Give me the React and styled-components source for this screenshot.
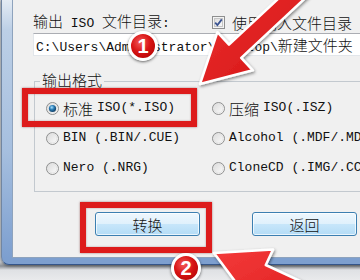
import React from 'react'
import styled, { createGlobalStyle } from 'styled-components'

const GlobalStyle = createGlobalStyle`
  html, body { margin: 0; padding: 0; }
  body { background: #d6d8db; overflow: hidden; }
`

const Screen = styled.div`
  position: relative;
  width: 360px;
  height: 280px;
  overflow: hidden;
  background: linear-gradient(180deg, #c9ccd0 0, #c9ccd0 262px, #8a8e94 266px, #dfe1e4 270px, #e9eaec 280px);
`

const Window = styled.div`
  width: 420px;
  height: 258px;
  padding: 0 0 6px 10px;
  border-left: 1px solid #7186a2;
  border-bottom: 1px solid #35568a;
  border-bottom-left-radius: 8px;
  margin-left: 1px;
  background: linear-gradient(180deg, #e4ebf3 0, #bccfe6 30px, #a6bfdf 150px, #7d9fcf 258px);
  box-shadow: 0 1px 3px rgba(0, 0, 0, 0.45);
`

const Body = styled.div`
  height: 100%;
  box-sizing: border-box;
  background: #f0f0f0;
  border-left: 1px solid #8ea3bd;
  border-bottom: 1px solid #8ea3bd;
  padding: 14px 0 0 20px;
  color: #111;
  font: 13px/16px "Liberation Mono", "Noto Sans CJK SC", monospace;
`

const Han = styled.span`
  font-family: "Noto Sans CJK SC", sans-serif;
  font-size: 15px;
  font-weight: 300;
  line-height: 1;
`

const mixed = (s) =>
  s
    .split(/([\u3400-\u9fff]+)/)
    .filter(Boolean)
    .map((p, i) =>
      /[\u3400-\u9fff]/.test(p) ? <Han key={i}>{p}</Han> : <React.Fragment key={i}>{p}</React.Fragment>
    )

const TopRow = styled.div`
  display: flex;
  align-items: center;
  height: 16px;
`

const Label = styled.span`
  width: ${(p) => p.$w || 'auto'};
  white-space: nowrap;
`

const CheckWrap = styled.label`
  display: flex;
  align-items: center;
  gap: 7px;
  white-space: nowrap;
`

const PathInput = styled.div`
  margin-top: 3px;
  height: 23px;
  box-sizing: border-box;
  background: #fff;
  border: 1px solid #e2e6ea;
  border-top-color: #abadb3;
  padding: 3px 0 0 2px;
  white-space: nowrap;
  overflow: hidden;
`

const Group = styled.fieldset`
  margin: 16px 0 0 1px;
  padding: 0 0 8px 11px;
  border: 1px solid #c3c9cf;
  border-right: none;
`

const Legend = styled.legend`
  margin-left: -6px;
  padding: 0 2px;
  height: 18px;
`

const Options = styled.div`
  display: grid;
  grid-template-columns: 166px 1fr;
  grid-auto-rows: 30px;
  margin-top: 3px;
`

const Option = styled.div`
  display: flex;
  align-items: center;
  gap: 4px;
  white-space: nowrap;
`

const Buttons = styled.div`
  display: flex;
  gap: 52px;
  margin: 20px 0 0 62px;
`

const Button = styled.div`
  width: 105px;
  height: 24px;
  box-sizing: border-box;
  border: 1px solid #3c7fb1;
  border-radius: 3px;
  background: linear-gradient(180deg, #eef7fd 0%, #e0f1fc 48%, #c7e6fa 52%, #b4dcf6 100%);
  box-shadow: inset 0 0 0 1px rgba(255, 255, 255, 0.7);
  display: flex;
  align-items: center;
  justify-content: center;
`

const Highlight = styled.div`
  position: absolute;
  left: ${(p) => p.$x}px;
  top: ${(p) => p.$y}px;
  width: ${(p) => p.$w}px;
  height: ${(p) => p.$h}px;
  box-sizing: border-box;
  border: 6px solid #dd1b1b;
  box-shadow: 0 0 2px rgba(90, 0, 0, 0.5), inset 0 0 2px rgba(90, 0, 0, 0.4);
`

const Badge = styled.div`
  position: absolute;
  left: ${(p) => p.$x - 15}px;
  top: ${(p) => p.$y - 15}px;
  width: 30px;
  height: 30px;
  box-sizing: border-box;
  border-radius: 50%;
  border: 3px solid #fff;
  background: radial-gradient(circle at 40% 35%, #f35a5a 0%, #d81414 45%, #a80000 100%);
  box-shadow: 0 1px 3px rgba(0, 0, 0, 0.6);
  color: #fff;
  font: bold 20px/24px "Liberation Sans", Arial, sans-serif;
  text-align: center;
`

const Overlay = styled.svg`
  position: absolute;
  left: 0;
  top: 0;
  width: 360px;
  height: 280px;
  pointer-events: none;
`

const arrowPoints = (tx, ty, dx, dy, L, W, s, len) => {
  const m = Math.hypot(dx, dy)
  const ux = dx / m
  const uy = dy / m
  const nx = -uy
  const ny = ux
  const bx = tx - L * ux
  const by = ty - L * uy
  const ex = tx - len * ux
  const ey = ty - len * uy
  const pts = [
    [tx, ty],
    [bx + W * nx, by + W * ny],
    [bx + s * nx, by + s * ny],
    [ex + s * nx, ey + s * ny],
    [ex - s * nx, ey - s * ny],
    [bx - s * nx, by - s * ny],
    [bx - W * nx, by - W * ny],
  ]
  return pts.map((p) => p.map((v) => v.toFixed(1)).join(',')).join(' ')
}

const Radio = ({ checked }) => (
  <svg width="13" height="13" viewBox="0 0 13 13">
    <defs>
      <linearGradient id="rg" x1="0" y1="0" x2="1" y2="1">
        <stop offset="0" stopColor="#d8d8d8" />
        <stop offset="1" stopColor="#ffffff" />
      </linearGradient>
      <radialGradient id="rd" cx="0.4" cy="0.35" r="0.7">
        <stop offset="0" stopColor="#a9e2ff" />
        <stop offset="0.45" stopColor="#2a7bb5" />
        <stop offset="1" stopColor="#0c3558" />
      </radialGradient>
    </defs>
    <circle cx="6.5" cy="6.5" r="6" fill="url(#rg)" stroke="#8e8f8f" />
    <circle cx="6.5" cy="6.5" r="4.5" fill="none" stroke="#e4e4e4" />
    {checked && <circle cx="6.5" cy="6.5" r="3.6" fill="url(#rd)" />}
  </svg>
)

const Check = () => (
  <svg width="13" height="13" viewBox="0 0 13 13">
    <defs>
      <linearGradient id="cg" x1="0" y1="0" x2="1" y2="1">
        <stop offset="0" stopColor="#dcdcdc" />
        <stop offset="1" stopColor="#fbfbfb" />
      </linearGradient>
    </defs>
    <rect x="0.5" y="0.5" width="12" height="12" fill="#f4f4f4" stroke="#8e8f8f" />
    <rect x="2.5" y="2.5" width="8" height="8" fill="url(#cg)" stroke="#c6c6c6" />
    <path d="M3.2 6.6 L5.4 9 L9.8 3.4" fill="none" stroke="#3a5391" strokeWidth="1.8" />
  </svg>
)

const formats = [
  ['标准 ISO(*.ISO)', true],
  ['压缩 ISO(.ISZ)', false],
  ['BIN (.BIN/.CUE)', false],
  ['Alcohol (.MDF/.MDS)', false],
  ['Nero (.NRG)', false],
  ['CloneCD (.IMG/.CCD)', false],
]

export default function App() {
  return (
    <>
      <GlobalStyle />
      <Screen>
        <Window>
          <Body>
            <TopRow>
              <Label $w="179px">{mixed('输出 ISO 文件目录:')}</Label>
              <CheckWrap>
                <Check />
                {mixed('使用输入文件目录')}
              </CheckWrap>
            </TopRow>
            <PathInput>{mixed('C:\\Users\\Administrator\\Desktop\\新建文件夹')}</PathInput>
            <Group>
              <Legend>{mixed('输出格式')}</Legend>
              <Options>
                {formats.map(([t, c]) => (
                  <Option key={t}>
                    <Radio checked={c} />
                    {mixed(t)}
                  </Option>
                ))}
              </Options>
            </Group>
            <Buttons>
              <Button>{mixed('转换')}</Button>
              <Button>{mixed('返回')}</Button>
            </Buttons>
          </Body>
        </Window>

        <Highlight $x={22} $y={88} $w={175} $h={39} />
        <Highlight $x={80} $y={202} $w={132} $h={51} />

        <Overlay viewBox="0 0 360 280">
          <defs>
            <linearGradient id="ar" x1="0" y1="0" x2="1" y2="1">
              <stop offset="0" stopColor="#f43a3a" />
              <stop offset="1" stopColor="#cc0a0a" />
            </linearGradient>
            <filter id="sh" x="-20%" y="-20%" width="140%" height="140%">
              <feDropShadow dx="1" dy="1.5" stdDeviation="1.5" floodColor="#000" floodOpacity="0.45" />
            </filter>
          </defs>
          <polygon
            points={arrowPoints(200, 84, -0.731, 0.682, 48, 26, 9, 200)}
            fill="url(#ar)"
            stroke="#fff"
            strokeWidth="2.5"
            strokeLinejoin="round"
            filter="url(#sh)"
          />
          <polygon
            points={arrowPoints(214, 253, -0.906, -0.423, 52, 28, 11, 200)}
            fill="url(#ar)"
            stroke="#fff"
            strokeWidth="2.5"
            strokeLinejoin="round"
            filter="url(#sh)"
          />
        </Overlay>

        <Badge $x={143} $y={46}>1</Badge>
        <Badge $x={186} $y={268}>2</Badge>
      </Screen>
    </>
  )
}
